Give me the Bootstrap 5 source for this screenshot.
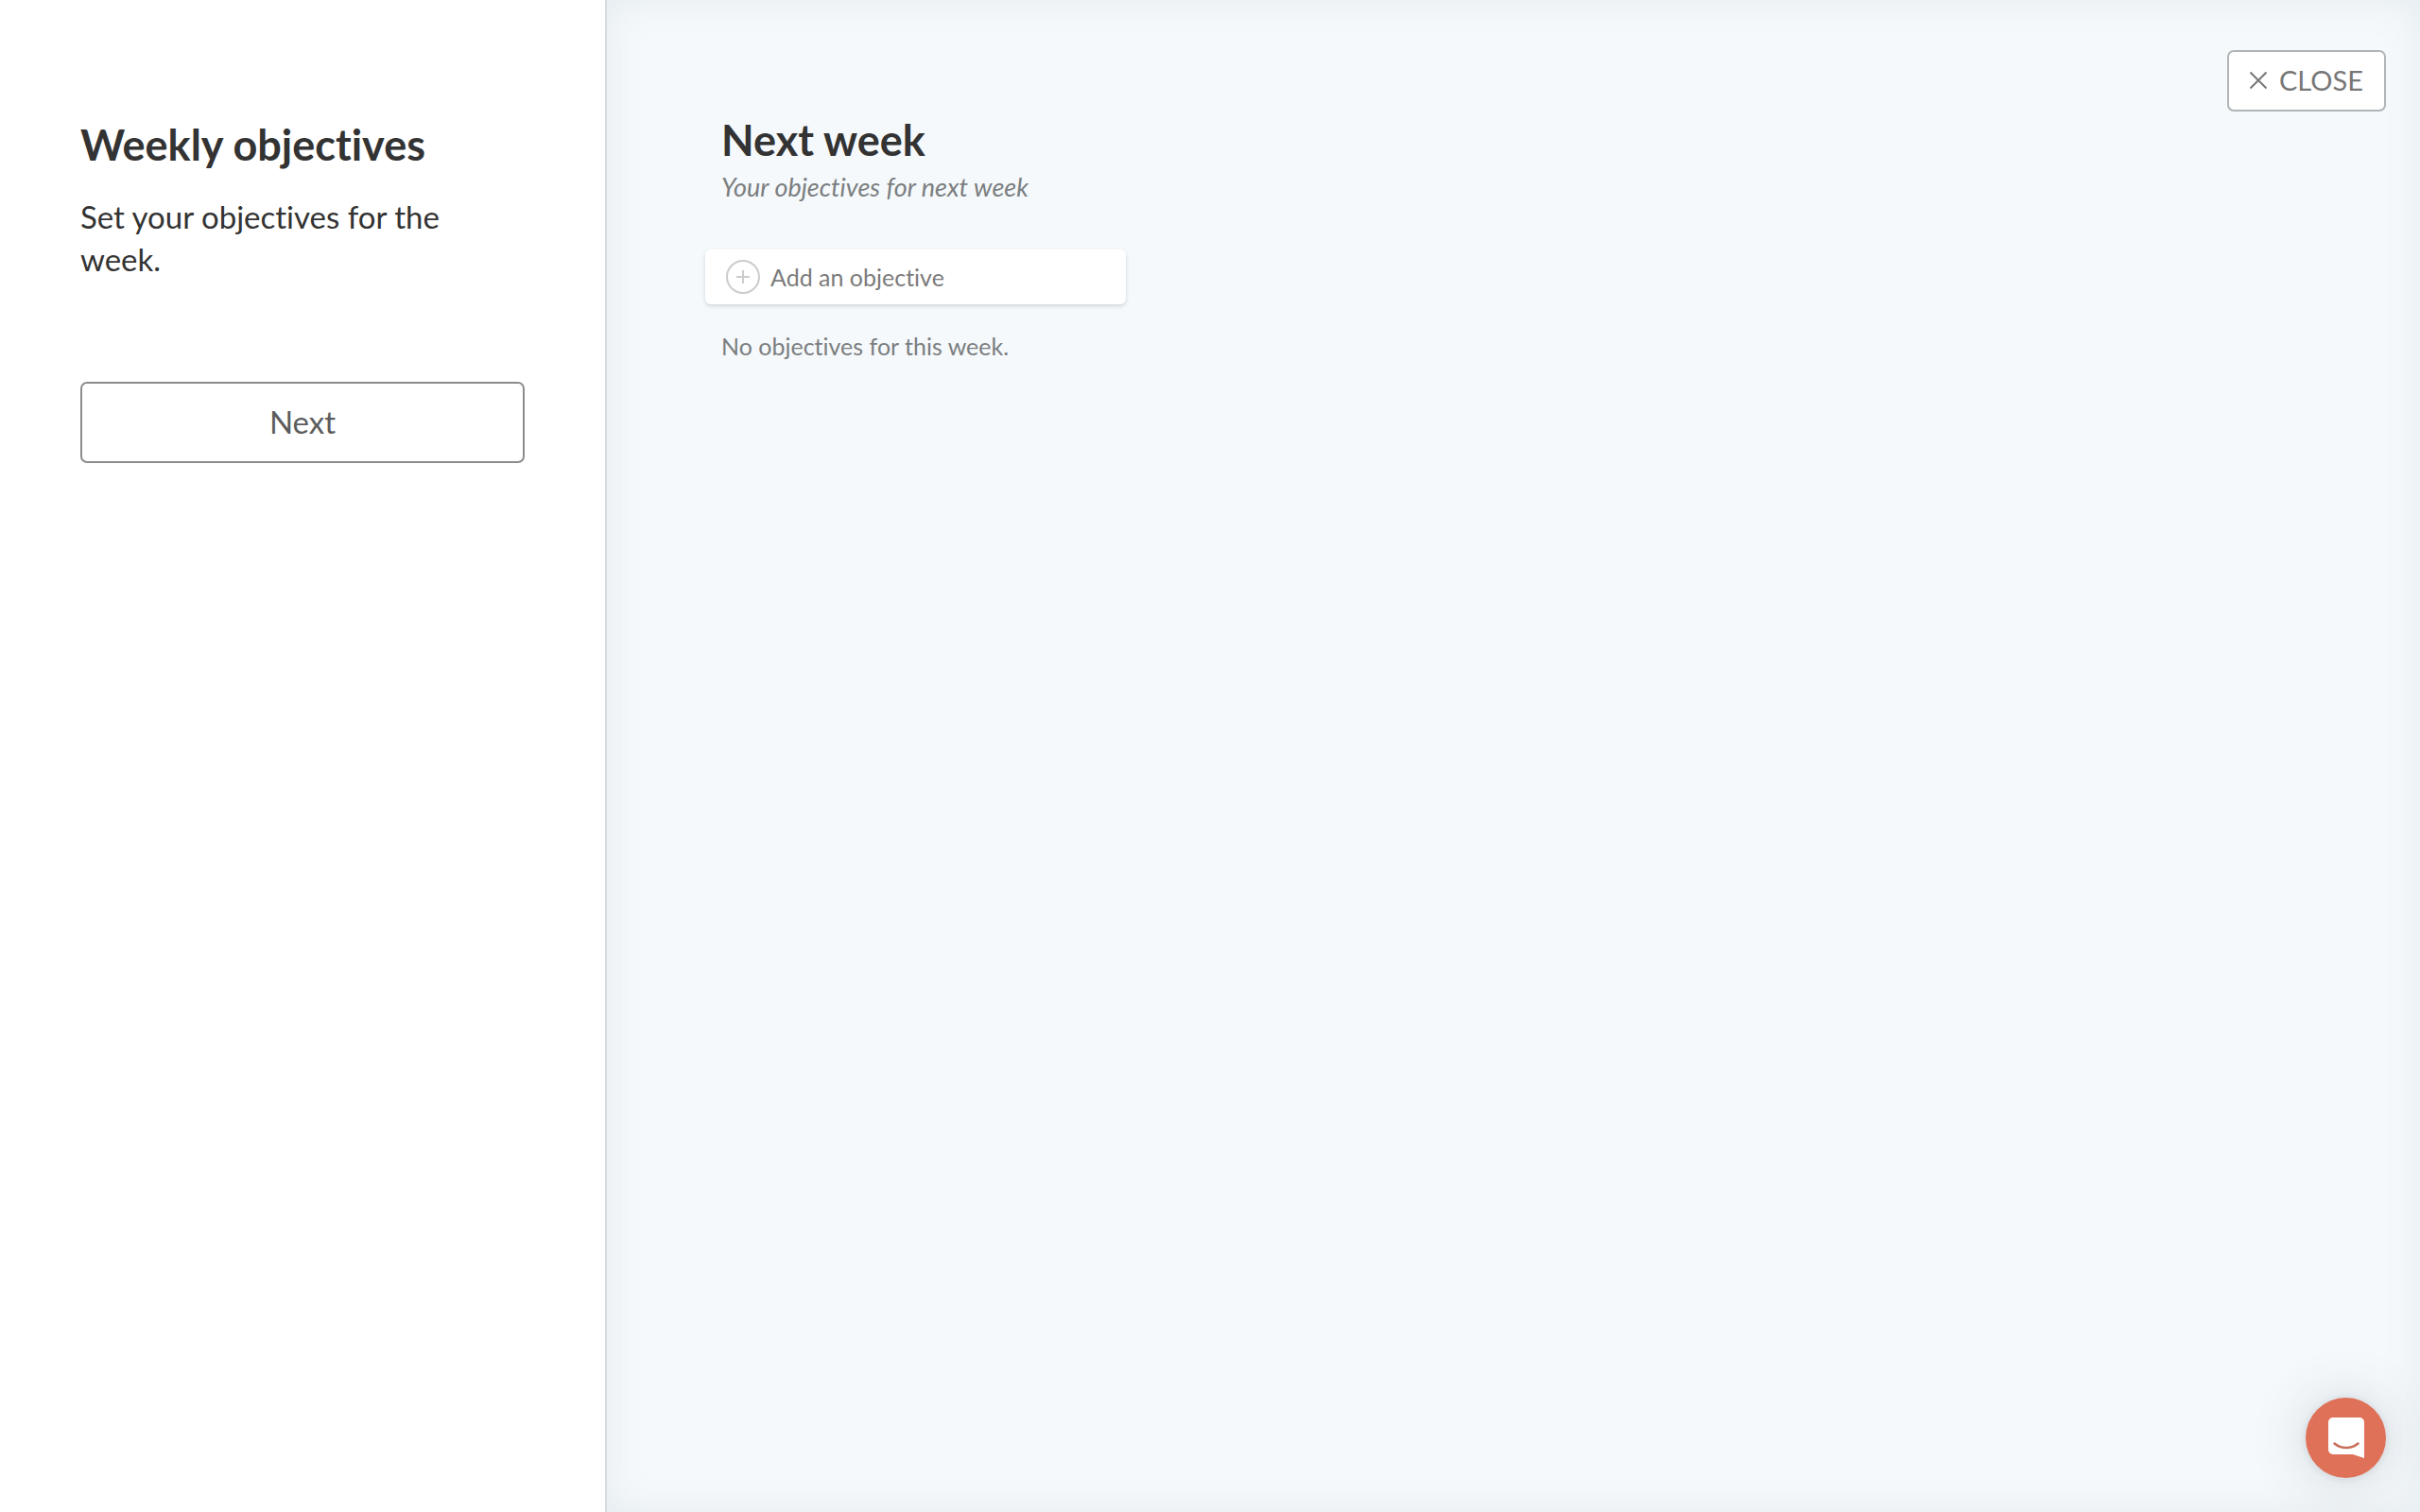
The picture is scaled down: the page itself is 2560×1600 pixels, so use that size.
<!DOCTYPE html>
<html lang="en">
<head>
<meta charset="utf-8">
<meta name="viewport" content="width=device-width, initial-scale=1">
<title>Weekly objectives</title>
<link href="https://cdn.jsdelivr.net/npm/bootstrap@5.3.0/dist/css/bootstrap.min.css" rel="stylesheet">
<style>
  body { font-family: Lato, "Liberation Sans", sans-serif; font-variant-ligatures: none; color: #333; background: #f5f9fc; }
  .side-panel { padding: 126px 85px 0; }
  .board { padding: 53px 36px 0 104px; border-left: 2px solid #d5dbdf; box-shadow: inset 0 0 40px rgba(90, 105, 115, .1); }
  .panel-title { font-size: 45px; line-height: 54px; font-weight: 700; margin-bottom: 27px; }
  .panel-text { font-size: 33px; line-height: 45px; margin-bottom: 107px; }
  .next-btn { height: 86px; padding: 0 0 2px; font-size: 33px; line-height: 45px; color: #5c5c5c; background: #fff; border: 2px solid #8c8c8c; border-radius: 7px; }
  .week-column { padding-top: 68px; }
  .week-head { padding-left: 17px; margin-bottom: 47px; }
  .week-title { font-size: 45px; line-height: 54px; font-weight: 700; margin-bottom: 4px; }
  .week-note { font-size: 27px; line-height: 38px; color: #7b7e80; }
  .add-card { height: 58px; padding: 0 22px; gap: 11px; border-radius: 6px; box-shadow: 0 2px 4px rgba(60, 75, 85, .2); }
  .add-input, .add-input::placeholder { font-size: 25px; line-height: 38px; font-variant-ligatures: none; color: #7b7b7b; opacity: 1; }
  .empty-text { font-size: 25px; line-height: 38px; color: #7b7e80; padding-left: 17px; margin-top: 25px; }
  .close-btn { height: 65px; gap: 13px; padding: 0 22px 2px; font-size: 29px; line-height: 38px; color: #777; background: #fff; border: 2px solid #b0b5b6; border-radius: 7px; }
  .chat-btn { right: 36px; bottom: 36px; width: 85px; height: 85px; background: #df7158; box-shadow: 0 2px 60px rgba(60, 70, 80, .2), 0 1px 10px rgba(60, 70, 80, .12); }
  svg { display: block; }
</style>
</head>
<body>
<div class="row g-0 min-vh-100">
  <aside class="col-3 side-panel bg-white">
    <h1 class="panel-title">Weekly objectives</h1>
    <p class="panel-text">Set your objectives for the week.</p>
    <button type="button" class="btn next-btn w-100">Next</button>
  </aside>
  <main class="col-9 board d-flex justify-content-between align-items-start">
    <section class="week-column w-25">
      <header class="week-head">
        <h2 class="week-title">Next week</h2>
        <p class="week-note fst-italic mb-0">Your objectives for next week</p>
      </header>
      <div class="add-card bg-white d-flex align-items-center">
        <label for="objective" class="flex-shrink-0">
          <svg width="36" height="36" viewBox="0 0 36 36" fill="none" stroke="#ccc" stroke-width="2" aria-hidden="true"><circle cx="18" cy="18" r="17"/><path d="M18 11v14M11 18h14"/></svg>
        </label>
        <input id="objective" type="text" class="add-input form-control border-0 p-0 bg-transparent shadow-none" placeholder="Add an objective" aria-label="Add an objective">
      </div>
      <p class="empty-text mb-0">No objectives for this week.</p>
    </section>
    <button type="button" class="btn close-btn d-flex align-items-center flex-shrink-0">
      <svg width="18" height="18" viewBox="0 0 18 18" fill="none" stroke="#777" stroke-width="2" aria-hidden="true"><path d="M0.500 0.500l17 17M17.500 0.500l-17 17"/></svg>
      CLOSE
    </button>
  </main>
</div>
<button type="button" class="btn chat-btn position-fixed rounded-circle border-0 p-0 d-flex align-items-center justify-content-center" aria-label="Open chat">
  <svg width="38" height="44" viewBox="0 0 38 44" aria-hidden="true"><path d="M5 0h28a5 5 0 0 1 5 5v38c-4-1-8-3-12-4H5a5 5 0 0 1-5-5V5a5 5 0 0 1 5-5z" fill="#fff"/><path d="M6.500 27.500c7 6 18 6 25 0" fill="none" stroke="#c9705c" stroke-width="2.500" stroke-linecap="round"/></svg>
</button>
<script src="https://cdn.jsdelivr.net/npm/bootstrap@5.3.0/dist/js/bootstrap.bundle.min.js"></script>
</body>
</html>
